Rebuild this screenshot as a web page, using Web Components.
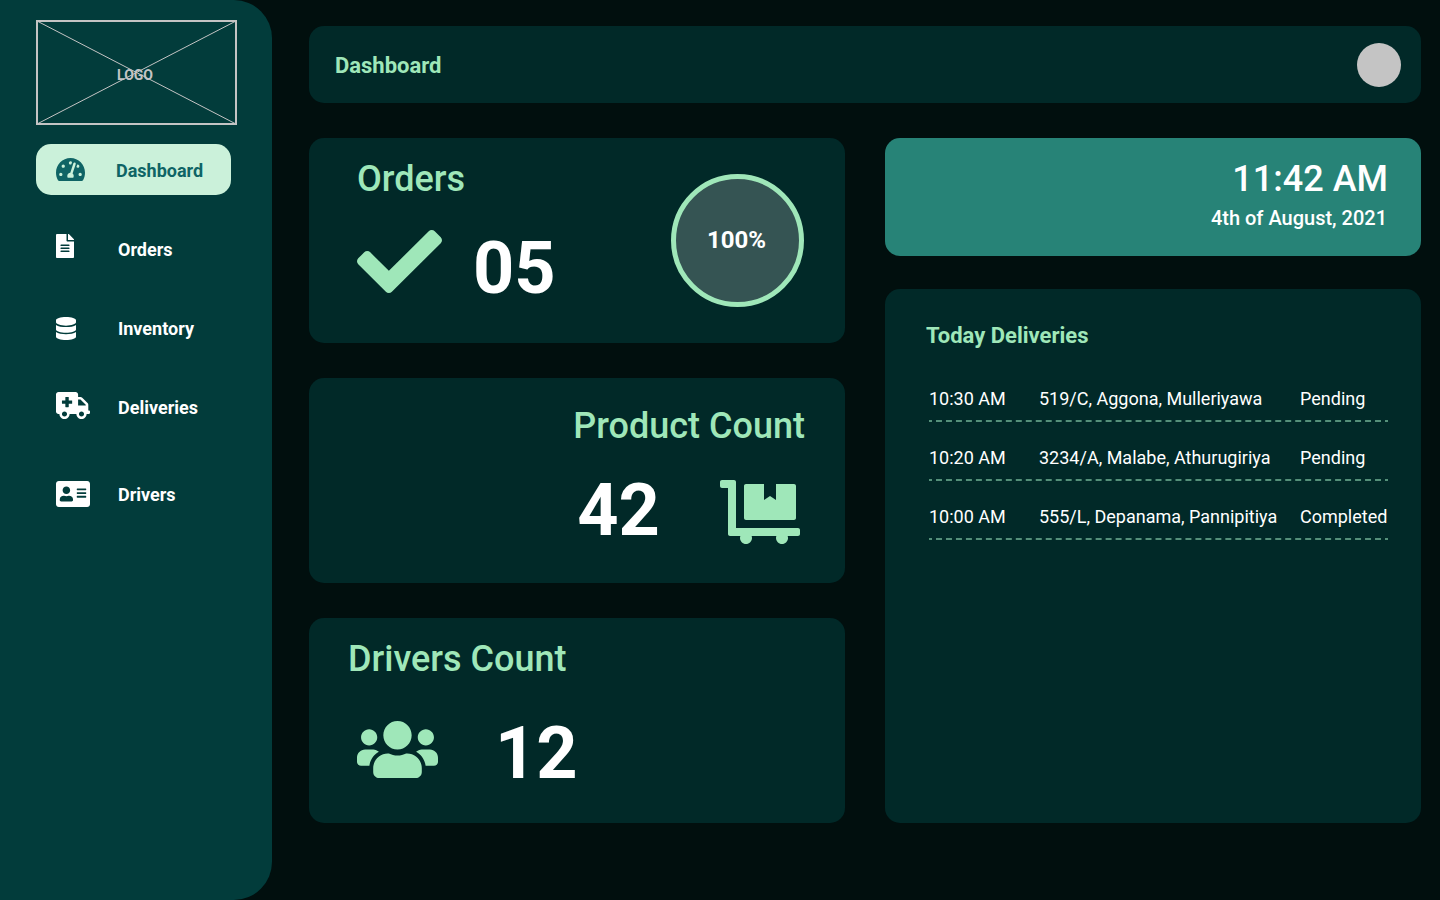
<!DOCTYPE html>
<html lang="en">
<head>
<meta charset="utf-8">
<title>Dashboard</title>
<style>
  html, body { margin: 0; height: 100%; background: #010f0e; }
  body { font-family: Roboto, "Liberation Sans", sans-serif; color: #fff; overflow: hidden; }
</style>
</head>
<body>
<app-shell>
  <side-bar slot="side">
    <logo-box>LOGO</logo-box>
    <nav-item active icon="gauge">Dashboard</nav-item>
    <nav-item icon="file">Orders</nav-item>
    <nav-item icon="database">Inventory</nav-item>
    <nav-item icon="ambulance">Deliveries</nav-item>
    <nav-item icon="card" class="last">Drivers</nav-item>
  </side-bar>
  <top-bar slot="top">Dashboard</top-bar>
  <stat-card slot="left" class="orders">
    <span slot="title">Orders</span>
    <fa-icon name="check"></fa-icon>
    <big-number>05</big-number>
    <progress-ring slot="end">100%</progress-ring>
  </stat-card>
  <stat-card slot="left" class="products">
    <span slot="title">Product Count</span>
    <big-number>42</big-number>
    <fa-icon name="dolly"></fa-icon>
  </stat-card>
  <stat-card slot="left" class="drivers">
    <span slot="title">Drivers Count</span>
    <fa-icon name="users"></fa-icon>
    <big-number>12</big-number>
  </stat-card>
  <clock-card slot="right"><span slot="time">11:42 AM</span><span slot="date">4th of August, 2021</span></clock-card>
  <deliveries-card slot="right">
    <span slot="title">Today Deliveries</span>
    <delivery-row><span slot="time">10:30 AM</span><span slot="place">519/C, Aggona, Mulleriyawa</span><span slot="state">Pending</span></delivery-row>
    <delivery-row><span slot="time">10:20 AM</span><span slot="place">3234/A, Malabe, Athurugiriya</span><span slot="state">Pending</span></delivery-row>
    <delivery-row><span slot="time">10:00 AM</span><span slot="place">555/L, Depanama, Pannipitiya</span><span slot="state">Completed</span></delivery-row>
  </deliveries-card>
</app-shell>
<script>
const ICONS = {
  gauge: { box: "0 32 576 448", w: 29, h: 23, d: "M288 32C128.94 32 0 160.94 0 320c0 52.8 14.25 102.26 39.06 144.8 5.61 9.62 16.3 15.2 27.44 15.2h443c11.14 0 21.83-5.58 27.44-15.2C561.75 422.26 576 372.8 576 320c0-159.06-128.94-288-288-288zm0 64c14.71 0 26.58 10.13 30.32 23.65-1.11 2.26-2.64 4.23-3.45 6.67l-9.22 27.67c-5.13 3.49-10.97 6.01-17.64 6.01-17.67 0-32-14.33-32-32S270.33 96 288 96zM96 384c-17.67 0-32-14.33-32-32s14.33-32 32-32 32 14.33 32 32-14.33 32-32 32zm48-160c-17.67 0-32-14.33-32-32s14.33-32 32-32 32 14.33 32 32-14.33 32-32 32zm246.77-72.41l-61.33 184C343.13 347.33 352 364.54 352 384c0 11.72-3.38 22.55-8.88 32H232.88c-5.5-9.45-8.88-20.28-8.88-32 0-33.94 26.5-61.43 59.9-63.59l61.34-184.01c4.17-12.56 17.73-19.45 30.36-15.17 12.57 4.19 19.35 17.79 15.17 30.36zm14.66 57.2l15.52-46.55c3.47-1.29 7.13-2.23 11.05-2.23 17.67 0 32 14.33 32 32s-14.33 32-32 32c-11.38-.01-20.89-6.28-26.57-15.22zM480 384c-17.67 0-32-14.33-32-32s14.33-32 32-32 32 14.33 32 32-14.33 32-32 32z" },
  file: { box: "0 0 384 512", w: 18, h: 24, d: "M224 136V0H24C10.7 0 0 10.7 0 24v464c0 13.3 10.7 24 24 24h336c13.3 0 24-10.7 24-24V160H248c-13.2 0-24-10.8-24-24zm64 236c0 6.6-5.4 12-12 12H108c-6.6 0-12-5.4-12-12v-8c0-6.6 5.4-12 12-12h168c6.6 0 12 5.4 12 12v8zm0-64c0 6.6-5.4 12-12 12H108c-6.6 0-12-5.4-12-12v-8c0-6.6 5.4-12 12-12h168c6.6 0 12 5.4 12 12v8zm0-72v8c0 6.6-5.4 12-12 12H108c-6.6 0-12-5.4-12-12v-8c0-6.6 5.4-12 12-12h168c6.6 0 12 5.4 12 12zm96-114.1v6.1H256V0h6.1c6.4 0 12.5 2.5 17 7l97.9 98c4.5 4.5 7 10.6 7 16.9z" },
  database: { box: "0 0 448 512", w: 20, h: 23, d: "M448 73.143v45.714C448 159.143 347.667 192 224 192S0 159.143 0 118.857V73.143C0 32.857 100.333 0 224 0s224 32.857 224 73.143zM448 176v102.857C448 319.143 347.667 352 224 352S0 319.143 0 278.857V176c48.125 33.143 136.208 48.572 224 48.572S399.874 209.143 448 176zm0 160v102.857C448 479.143 347.667 512 224 512S0 479.143 0 438.857V336c48.125 33.143 136.208 48.572 224 48.572S399.874 369.143 448 336z" },
  ambulance: { box: "0 0 640 512", w: 34, h: 27, d: "M624 352h-16V243.9c0-12.7-5.1-24.9-14.1-33.9L494 110.1c-9-9-21.2-14.1-33.9-14.1H416V48c0-26.5-21.5-48-48-48H48C21.5 0 0 21.5 0 48v320c0 26.5 21.5 48 48 48h16c0 53 43 96 96 96s96-43 96-96h128c0 53 43 96 96 96s96-43 96-96h48c8.8 0 16-7.2 16-16v-32c0-8.8-7.2-16-16-16zM160 464c-26.5 0-48-21.5-48-48s21.5-48 48-48 48 21.5 48 48-21.5 48-48 48zm144-248c0 4.4-3.6 8-8 8h-56v56c0 4.4-3.6 8-8 8h-48c-4.4 0-8-3.6-8-8v-56h-56c-4.4 0-8-3.6-8-8v-48c0-4.4 3.6-8 8-8h56v-56c0-4.4 3.6-8 8-8h48c4.4 0 8 3.6 8 8v56h56c4.4 0 8 3.6 8 8v48zm176 248c-26.5 0-48-21.5-48-48s21.5-48 48-48 48 21.5 48 48-21.5 48-48 48zm80-208H416V144h44.1l99.9 99.9V256z" },
  card: { box: "0 32 576 448", w: 34, h: 26, d: "M528 32H48C21.5 32 0 53.5 0 80v352c0 26.5 21.5 48 48 48h480c26.5 0 48-21.5 48-48V80c0-26.5-21.5-48-48-48zm-352 96c35.3 0 64 28.7 64 64s-28.7 64-64 64-64-28.7-64-64 28.7-64 64-64zm112 236.8c0 10.6-10 19.2-22.4 19.2H86.4C74 384 64 375.4 64 364.8v-19.2c0-31.8 30.1-57.6 67.2-57.6h5c12.3 5.1 25.7 8 39.8 8s27.6-2.9 39.8-8h5c37.1 0 67.2 25.8 67.2 57.6v19.2zM512 312c0 4.4-3.6 8-8 8H360c-4.4 0-8-3.6-8-8v-16c0-4.4 3.6-8 8-8h144c4.4 0 8 3.6 8 8v16zm0-64c0 4.4-3.6 8-8 8H360c-4.4 0-8-3.6-8-8v-16c0-4.4 3.6-8 8-8h144c4.4 0 8 3.6 8 8v16zm0-64c0 4.4-3.6 8-8 8H360c-4.4 0-8-3.6-8-8v-16c0-4.4 3.6-8 8-8h144c4.4 0 8 3.6 8 8v16z" },
  check: { box: "0 65.1 512 381.8", w: 85, h: 63, d: "M173.898 439.404l-166.4-166.4c-9.997-9.997-9.997-26.206 0-36.204l36.203-36.204c9.997-9.998 26.207-9.998 36.204 0L192 312.69 432.095 72.596c9.997-9.997 26.207-9.997 36.204 0l36.203 36.204c9.997 9.997 9.997 26.206 0 36.204l-294.4 294.401c-9.998 9.997-26.207 9.997-36.204-.001z" },
  dolly: { box: "0 0 640 512", w: 80, h: 64, d: "M208 320h384c8.8 0 16-7.2 16-16V48c0-8.8-7.2-16-16-16H448v128l-48-32-48 32V32H208c-8.8 0-16 7.2-16 16v256c0 8.8 7.2 16 16 16zm416 64H128V16c0-8.8-7.2-16-16-16H16C7.2 0 0 7.2 0 16v32c0 8.8 7.2 16 16 16h48v368c0 8.8 7.2 16 16 16h82.9c-1.8 5-2.9 10.4-2.9 16 0 26.5 21.5 48 48 48s48-21.5 48-48c0-5.6-1.2-11-2.9-16H451c-1.8 5-2.9 10.4-2.9 16 0 26.5 21.5 48 48 48s48-21.5 48-48c0-5.6-1.2-11-2.9-16H624c8.8 0 16-7.2 16-16v-32c0-8.8-7.2-16-16-16z" },
  users: { box: "0 32 640 448", w: 81, h: 57, d: "M96 224c35.3 0 64-28.7 64-64s-28.7-64-64-64-64 28.7-64 64 28.7 64 64 64zm448 0c35.3 0 64-28.7 64-64s-28.7-64-64-64-64 28.7-64 64 28.7 64 64 64zm32 32h-64c-17.6 0-33.5 7.1-45.1 18.6 40.3 22.1 68.9 62 75.1 109.4h66c17.7 0 32-14.3 32-32v-32c0-35.3-28.7-64-64-64zm-256 0c61.9 0 112-50.1 112-112S381.9 32 320 32 208 82.1 208 144s50.1 112 112 112zm76.8 32h-8.3c-20.8 10-43.9 16-68.5 16s-47.6-6-68.5-16h-8.3C179.6 288 128 339.6 128 403.2V432c0 26.5 21.5 48 48 48h288c26.5 0 48-21.5 48-48v-28.8c0-63.6-51.6-115.2-115.2-115.2zm-223.7-13.4C161.5 263.1 145.6 256 128 256H64c-35.3 0-64 28.7-64 64v32c0 17.7 14.3 32 32 32h65.9c6.3-47.4 34.9-87.3 75.2-109.4z" }
};

function define(name, render) {
  customElements.define(name, class extends HTMLElement {
    constructor() { super(); this.attachShadow({ mode: "open" }); }
    connectedCallback() { this.shadowRoot.innerHTML = render(this); }
  });
}

define("fa-icon", el => {
  const i = ICONS[el.getAttribute("name")];
  return `<style>
    :host { display: block; flex: none; width: ${i.w}px; height: ${i.h}px; }
    svg { display: block; fill: currentColor; }
  </style><svg width="${i.w}" height="${i.h}" viewBox="${i.box}" preserveAspectRatio="none"><path d="${i.d}"/></svg>`;
});

define("app-shell", () => `<style>
  :host { display: grid; grid-template-columns: 272px 1fr; height: 900px; width: 1440px; }
  main { padding: 26px 19px 77px 37px; display: flex; flex-direction: column; gap: 35px; }
  .cols { flex: 1; display: grid; grid-template-columns: 536px 536px; gap: 40px; }
  .l, .r { display: flex; flex-direction: column; }
  .l { gap: 35px; } .r { gap: 33px; }
</style>
<slot name="side"></slot>
<main><slot name="top"></slot>
  <div class="cols"><div class="l"><slot name="left"></slot></div><div class="r"><slot name="right"></slot></div></div>
</main>`);

define("side-bar", () => `<style>
  :host { display: flex; flex-direction: column; box-sizing: border-box; gap: 28px; padding: 20px 35px 0 36px;
    background: #023c3b; border-radius: 0 38px 38px 0; }
  ::slotted(logo-box) { margin-bottom: -9px; }
  ::slotted(.last) { margin-top: 8px; }
</style><slot></slot>`);

define("logo-box", () => `<style>
  :host { display: grid; width: 201px; height: 105px; color: #c4c4c4; font-size: 14px; line-height: 16px; font-weight: 700; }
  svg, span { grid-area: 1 / 1; }
  svg { display: block; fill: none; stroke: #c4c4c4; }
  span { padding: 47px 0 0 81px; }
</style>
<svg width="201" height="105"><rect x="1" y="1" width="199" height="103" stroke-width="2"/><path d="M1 1L200 104M1 104L200 1"/></svg>
<span><slot></slot></span>`);

define("nav-item", el => `<style>
  :host { display: grid; grid-template-columns: 62px 1fr; align-items: center; box-sizing: border-box;
    width: 195px; height: 51px; padding-left: 20px; border-radius: 15px;
    font-size: 18px; line-height: 21px; font-weight: 700; }
  :host([active]) { background: #cbf1da; color: #0f6465; grid-template-columns: 60px 1fr; }
  :host([icon=file]) fa-icon { margin-bottom: 5px; }
  :host([icon=database]) fa-icon { margin-top: 2px; }
  :host([icon=ambulance]) fa-icon { margin-bottom: 2px; }
  :host([icon=card]) fa-icon { margin-top: 1px; }
  span { padding-top: 2px; }
</style><fa-icon name="${el.getAttribute("icon")}"></fa-icon><span><slot></slot></span>`);

define("top-bar", () => `<style>
  :host { display: flex; align-items: center; justify-content: space-between; box-sizing: border-box; height: 77px;
    padding: 0 20px 0 26px; border-radius: 15px; background: #012928;
    color: #9fe7b9; font-size: 22px; line-height: 26px; font-weight: 700; }
  span { padding-top: 2px; }
  i { width: 44px; height: 44px; border-radius: 50%; background: #c4c4c4; }
</style><span><slot></slot></span><i></i>`);

define("stat-card", () => `<style>
  :host { display: flex; justify-content: space-between; box-sizing: border-box; height: 205px;
    border-radius: 15px; background: #012928; color: #9fe7b9; padding: 20px 41px 0 48px; }
  .t { font-size: 36px; line-height: 42px; font-weight: 500; }
  .row { display: flex; align-items: flex-start; margin-top: 27px; gap: 31px; }
  :host(.products) { justify-content: flex-end; padding: 27px 40px 0 0; }
  :host(.products) .row { margin-top: 22px; gap: 60px; padding-left: 4px; }
  :host(.drivers) { padding-left: 39px; }
  :host(.drivers) .row { margin-top: 32px; gap: 57px; padding-left: 9px; }
  ::slotted(fa-icon) { margin-top: var(--drop, 3px); }
  :host(.products) { --drop: 11px; }
  :host(.drivers) { --drop: 9px; }
</style>
<div><div class="t"><slot name="title"></slot></div><div class="row"><slot></slot></div></div><slot name="end"></slot>`);

define("big-number", () => `<style>
  :host { display: block; color: #fff; font-size: 72px; line-height: 84px; font-weight: 700; }
</style><slot></slot>`);

define("progress-ring", () => `<style>
  :host { display: flex; align-items: center; justify-content: center; box-sizing: border-box; width: 133px; height: 133px;
    margin-top: 16px; border: 5px solid #9fe7b9; border-radius: 50%; background: #355453; color: #fff;
    font-size: 24px; line-height: 28px; font-weight: 700; }
  span { padding: 0 2px 2px 0; }
</style><span><slot></slot></span>`);

define("clock-card", () => `<style>
  :host { display: flex; flex-direction: column; align-items: flex-end; box-sizing: border-box; height: 118px;
    padding: 20px 33px 0; border-radius: 15px; background: #278377; font-weight: 500; gap: 7px; }
  .t { font-size: 36px; line-height: 42px; }
  .d { font-size: 20px; line-height: 23px; padding-right: 1px; }
</style><div class="t"><slot name="time"></slot></div><div class="d"><slot name="date"></slot></div>`);

define("deliveries-card", () => `<style>
  :host { display: flex; flex-direction: column; flex: 1; box-sizing: border-box; padding: 34px 33px 0 44px;
    border-radius: 15px; background: #012928; }
  h2 { margin: 0 0 39px -3px; color: #9fe7b9; font-size: 22px; line-height: 26px; font-weight: 700; }
  .rows { display: flex; flex-direction: column; gap: 25px; }
</style><h2><slot name="title"></slot></h2><div class="rows"><slot></slot></div>`);

define("delivery-row", () => `<style>
  :host { display: block; font-size: 18px; line-height: 21px; height: 34px; white-space: nowrap; }
  .c { display: grid; grid-template-columns: 110px 261px 1fr; height: 32px; }
  svg { display: block; stroke: #55907a; stroke-width: 2; stroke-dasharray: 5.987 3.991; stroke-dashoffset: 2.99; }
</style><div class="c"><slot name="time"></slot><slot name="place"></slot><slot name="state"></slot></div>
<svg width="459" height="2"><path d="M0 1H459"/></svg>`);
</script>
</body>
</html>
